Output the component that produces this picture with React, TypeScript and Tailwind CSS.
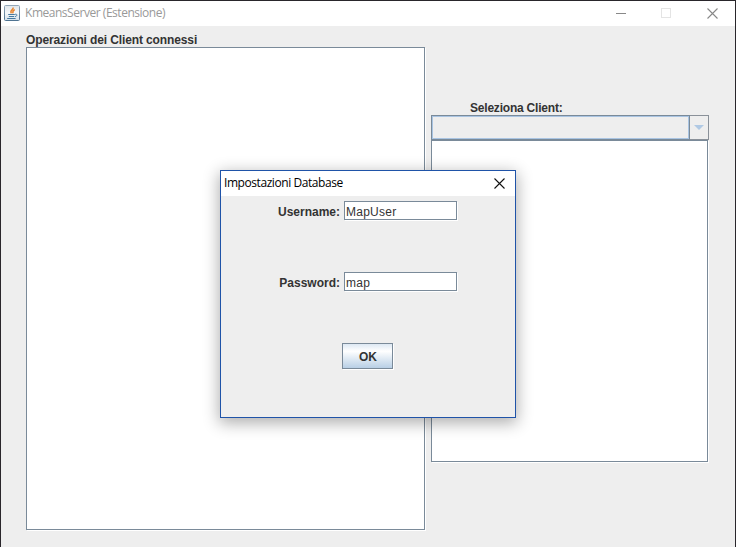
import React from "react";

const SWING = "font-['Liberation_Sans',Arial,sans-serif] text-[12px] leading-[16px] whitespace-nowrap";
const SEGOE = "font-['Open_Sans','Noto_Sans',sans-serif] text-[12px] leading-[16px] whitespace-nowrap";

function JavaIcon() {
  return (
    <svg width="16" height="16" viewBox="0 0 16 16" className="block shrink-0">
      <defs>
        <linearGradient id="tile" x1="0" y1="0" x2="0" y2="1">
          <stop offset="0" stopColor="#93a6b8" />
          <stop offset="1" stopColor="#4f7391" />
        </linearGradient>
        <linearGradient id="face" x1="0" y1="0" x2="0" y2="1">
          <stop offset="0" stopColor="#dfe5ea" />
          <stop offset="0.5" stopColor="#f6f8fa" />
          <stop offset="1" stopColor="#d3dfe9" />
        </linearGradient>
      </defs>
      <rect x="0.5" y="0.5" width="15" height="15" rx="1" fill="url(#face)" stroke="url(#tile)" />
      <path d="M9.2 2.5C9.6 4.8 5.2 5.2 7.4 8.4M10.8 4.6C8.4 5.6 8.4 6.6 9 8.4" fill="none" stroke="#e8842e" strokeWidth="1.4" />
      <path d="M4.2 9.5H10.8M4.8 11.5H10.2M3.2 13.5H11.6M11 9.3C13.8 8.7 13.4 11.2 11 11.6" fill="none" stroke="#46799f" strokeWidth="1" />
    </svg>
  );
}

function Cross({ color }: { color: string }) {
  return (
    <svg width="11" height="11" viewBox="0 0 11 11" className="block">
      <path d="M0.5 0.5L10.5 10.5M10.5 0.5L0.5 10.5" stroke={color} strokeWidth="1.1" />
    </svg>
  );
}

function Field({ label, value }: { label: string; value: string }) {
  return (
    <div className="flex h-[19px]">
      <div className={`${SWING} w-[123px] pt-[3px] pr-[4px] text-right font-bold text-[#333333]`}>{label}</div>
      <div className={`${SWING} h-[19px] w-[113px] border border-[#7a8a99] bg-white pt-[2px] pl-px text-[#333333] shadow-[1px_1px_0_#ffffff]`}>
        <span className="tracking-[0.25px]">{value}</span>
      </div>
    </div>
  );
}

function DatabaseDialog() {
  return (
    <div className="absolute top-[169px] left-[219px] h-[248px] w-[296px] border border-[#1f53a8] bg-[#eeeeee] shadow-[0_4px_15px_1px_rgba(0,0,0,0.32)]">
      <div className="flex h-[25px] justify-between bg-white pt-[4px] pr-[10px] pl-[3px]">
        <span className={`${SEGOE} tracking-[-0.43px] text-black`}>Impostazioni Database</span>
        <div className="pt-[3px]"><Cross color="#111111" /></div>
      </div>
      <div className="flex flex-col pt-[5px]">
        <Field label="Username:" value="MapUser" />
        <div className="h-[52px]" />
        <Field label="Password:" value="map" />
        <div className={`${SWING} mt-[52px] ml-[121px] flex h-[26px] w-[51px] items-center justify-center border border-[#7a8a99] bg-linear-to-b from-[#dde8f3] via-white via-30% to-[#b8cfe5] pt-[2px] pl-px font-bold text-[#333333] shadow-[1px_1px_0_#ffffff]`}>
          <span>OK</span>
        </div>
      </div>
    </div>
  );
}

export default function App() {
  return (
    <div className="relative flex h-[547px] w-[736px] flex-col overflow-hidden border-x border-t border-[#29262b] bg-[#eeeeee]">
      <div className="flex h-[25px] shrink-0 justify-between bg-white pt-[4px] pr-[17px] pl-[3px]">
        <div className="flex">
          <JavaIcon />
          <span className={`${SEGOE} ml-[5px] tracking-[-0.47px] text-[#999999]`}>KmeansServer (Estensione)</span>
        </div>
        <div className="flex pt-[3px]">
          <div className="mt-[5px] h-px w-[10px] bg-[#888888]" />
          <div className="ml-[35px] h-[10px] w-[10px] border border-[#e4e4e4]" />
          <div className="ml-[36px]"><Cross color="#888888" /></div>
        </div>
      </div>
      <div className="flex pl-[25px]">
        <div className="w-[399px] pt-[6px]">
          <div className={`${SWING} h-[15px] font-bold tracking-[-0.12px] text-[#333333]`}>Operazioni dei Client connessi</div>
          <div className="h-[483px] border border-[#7a8a99] bg-white shadow-[1px_1px_0_#ffffff]" />
        </div>
        <div className="ml-[6px] w-[278px] pt-[74px]">
          <div className={`${SWING} h-[15px] pl-[39px] font-bold tracking-[-0.21px] text-[#333333]`}>Seleziona Client:</div>
          <div className="flex h-[25px] border border-[#8a9199]">
            <div className="w-[257px] border border-[#a9c4e2] shadow-[0_0_0_1px_#7a8a99]" />
            <div className="ml-px flex flex-1 justify-center pt-[9px]">
              <svg width="10" height="5" viewBox="0 0 10 5"><path d="M0 0H10L5 5Z" fill="#b0c9e4" /></svg>
            </div>
          </div>
          <div className="h-[322px] w-[277px] border border-[#7a8a99] bg-white shadow-[1px_1px_0_#ffffff]" />
        </div>
      </div>
      <DatabaseDialog />
    </div>
  );
}
